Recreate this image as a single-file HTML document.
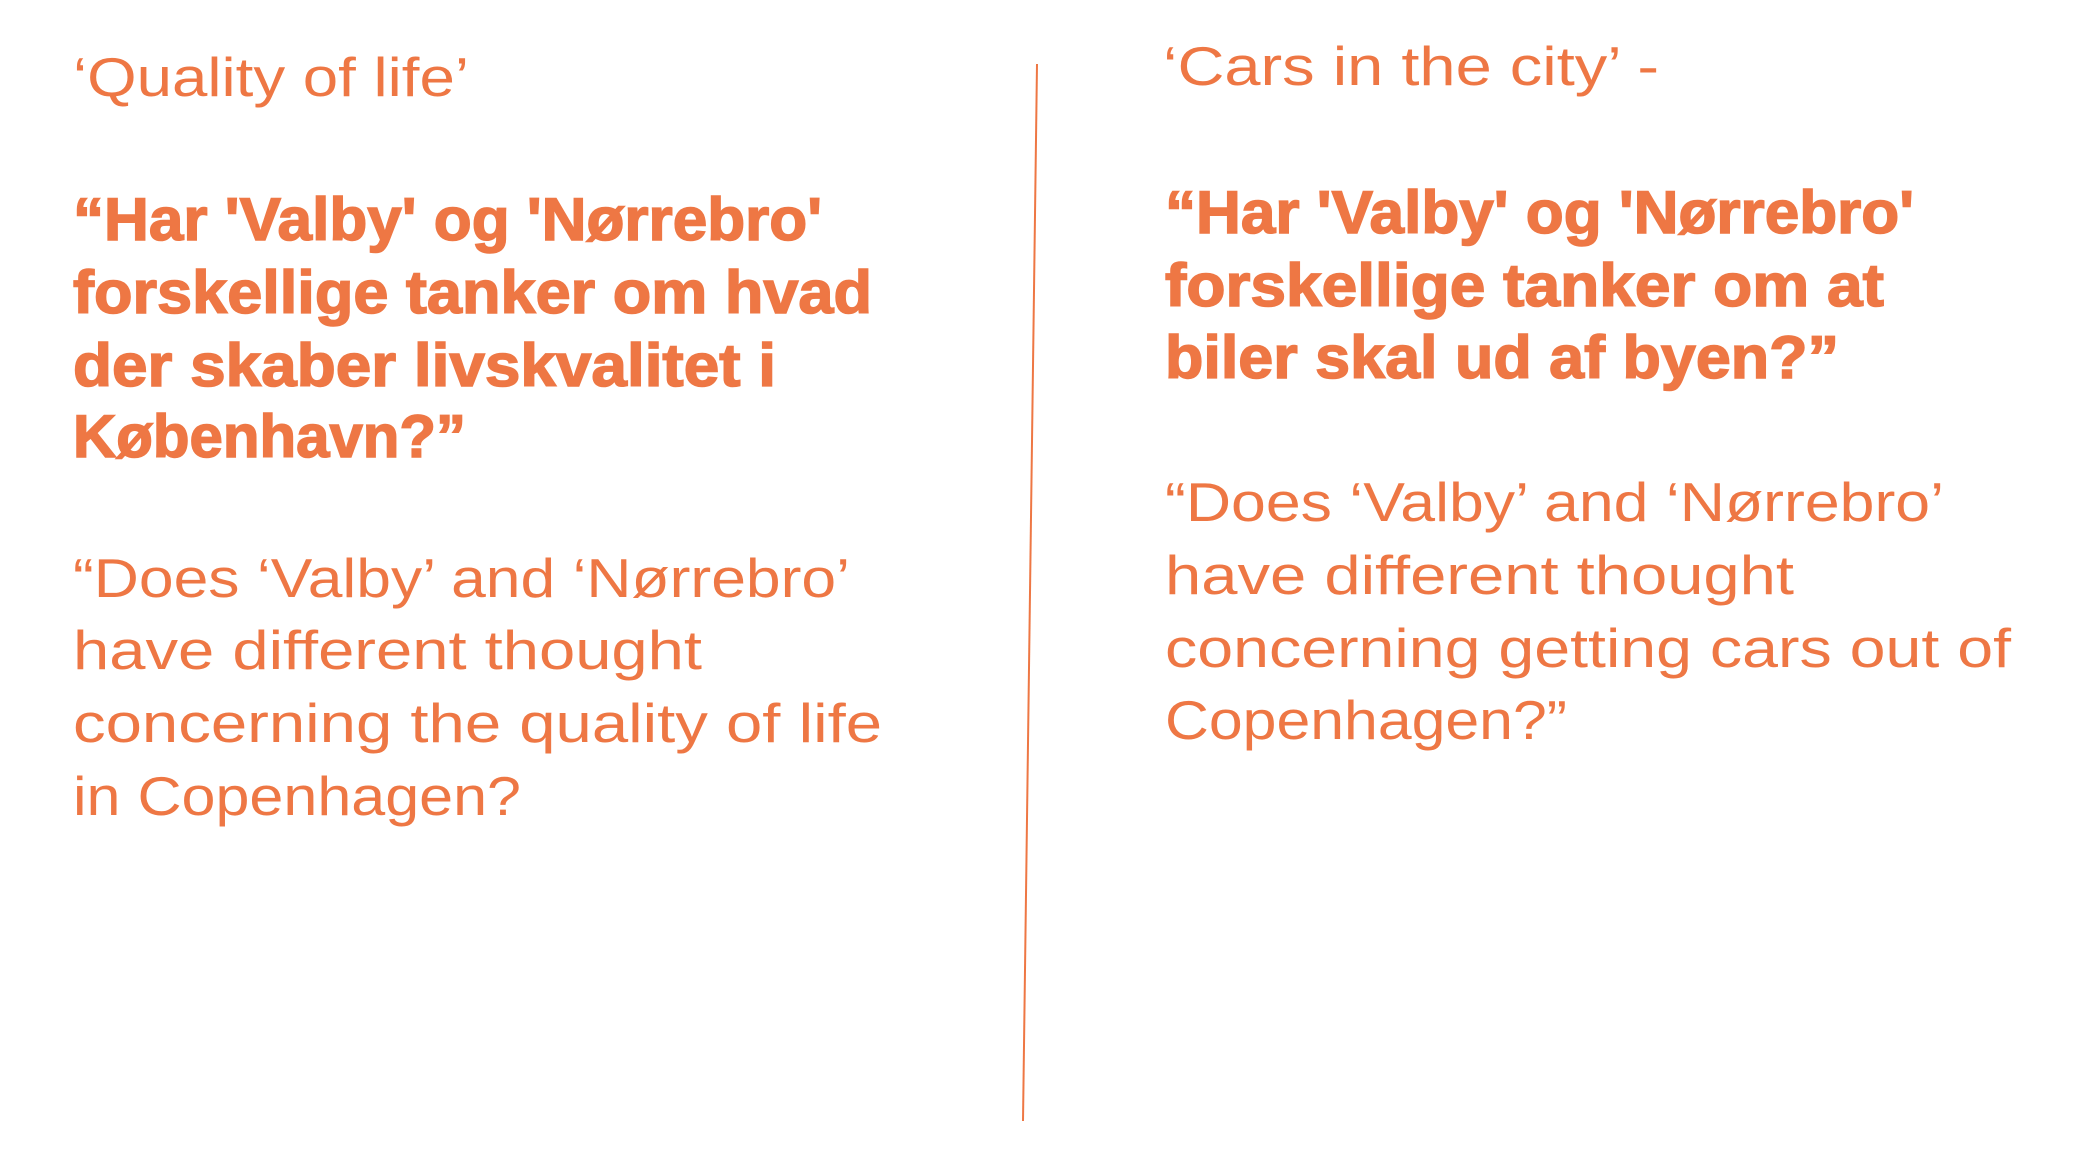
<!DOCTYPE html>
<html><head><meta charset="utf-8"><style>
html,body{margin:0;padding:0;background:#fff;width:2078px;height:1152px;overflow:hidden}
svg{display:block}
.r{font-family:"Liberation Sans",sans-serif;font-size:55px;fill:#EE7744;font-weight:normal}
.b{font-family:"Liberation Sans",sans-serif;font-size:60px;fill:#EE7744;font-weight:bold;stroke:#EE7744;stroke-width:1.5}
</style></head><body>
<svg width="2078" height="1152" viewBox="0 0 2078 1152" xmlns="http://www.w3.org/2000/svg">
<line x1="1037" y1="64" x2="1023" y2="1121" stroke="#EE7744" stroke-width="2"/>
<text class="r" x="73" y="96" textLength="396" lengthAdjust="spacingAndGlyphs">‘Quality of life’</text>
<text class="b" x="73" y="240" textLength="749" lengthAdjust="spacingAndGlyphs">“Har 'Valby' og 'Nørrebro'</text>
<text class="b" x="73" y="313" textLength="799" lengthAdjust="spacingAndGlyphs">forskellige tanker om hvad</text>
<text class="b" x="73" y="386" textLength="703" lengthAdjust="spacingAndGlyphs">der skaber livskvalitet i</text>
<text class="b" x="73" y="457" textLength="393" lengthAdjust="spacingAndGlyphs">København?”</text>
<text class="r" x="73" y="597" textLength="777" lengthAdjust="spacingAndGlyphs">“Does ‘Valby’ and ‘Nørrebro’</text>
<text class="r" x="73" y="669" textLength="629" lengthAdjust="spacingAndGlyphs">have different thought</text>
<text class="r" x="73" y="742" textLength="809" lengthAdjust="spacingAndGlyphs">concerning the quality of life</text>
<text class="r" x="73" y="815" textLength="448" lengthAdjust="spacingAndGlyphs">in Copenhagen?</text>

<text class="r" x="1163" y="85" textLength="496" lengthAdjust="spacingAndGlyphs">‘Cars in the city’ -</text>
<text class="b" x="1165" y="233" textLength="749" lengthAdjust="spacingAndGlyphs">“Har 'Valby' og 'Nørrebro'</text>
<text class="b" x="1165" y="306" textLength="719" lengthAdjust="spacingAndGlyphs">forskellige tanker om at</text>
<text class="b" x="1165" y="378" textLength="674" lengthAdjust="spacingAndGlyphs">biler skal ud af byen?”</text>
<text class="r" x="1165" y="521" textLength="779" lengthAdjust="spacingAndGlyphs">“Does ‘Valby’ and ‘Nørrebro’</text>
<text class="r" x="1165" y="594" textLength="629" lengthAdjust="spacingAndGlyphs">have different thought</text>
<text class="r" x="1165" y="667" textLength="846" lengthAdjust="spacingAndGlyphs">concerning getting cars out of</text>
<text class="r" x="1165" y="739" textLength="402" lengthAdjust="spacingAndGlyphs">Copenhagen?”</text>
</svg>
</body></html>
